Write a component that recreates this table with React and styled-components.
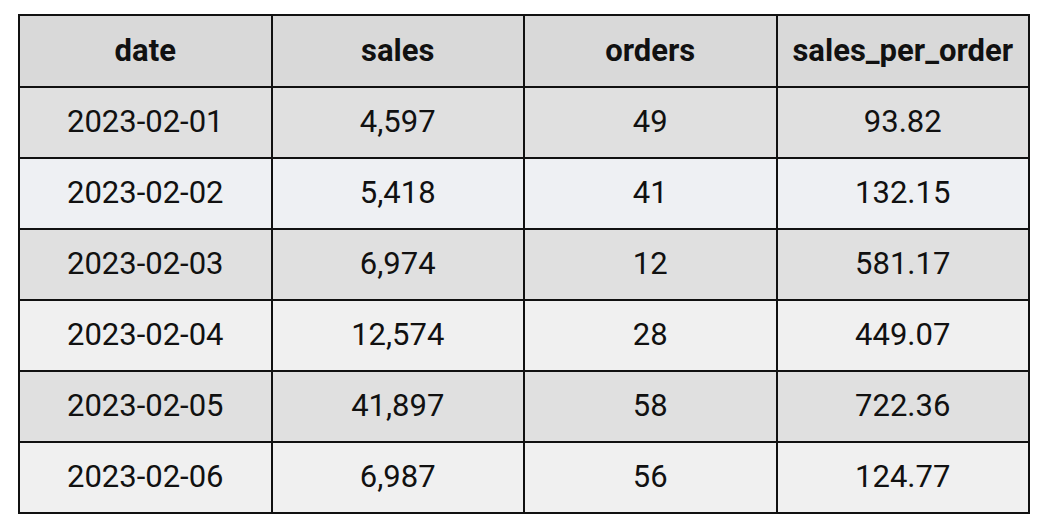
import React from "react";
import styled, { createGlobalStyle } from "styled-components";

const GlobalStyle = createGlobalStyle`
  body {
    margin: 0;
    background: #ffffff;
    font-family: Roboto, "Liberation Sans", sans-serif;
  }
`;

const rows = [
  { date: "2023-02-01", sales: "4,597", orders: 49, spo: "93.82" },
  { date: "2023-02-02", sales: "5,418", orders: 41, spo: "132.15" },
  { date: "2023-02-03", sales: "6,974", orders: 12, spo: "581.17" },
  { date: "2023-02-04", sales: "12,574", orders: 28, spo: "449.07" },
  { date: "2023-02-05", sales: "41,897", orders: 58, spo: "722.36" },
  { date: "2023-02-06", sales: "6,987", orders: 56, spo: "124.77" },
];

const rowColors = ["#e0e0e0", "#eef0f3", "#e0e0e0", "#f0f0f0", "#e0e0e0", "#f0f0f0"];

const Page = styled.div`
  padding: 14px 21px 18px 18px;
`;

const Table = styled.table`
  width: 1012px;
  border-collapse: collapse;
  table-layout: fixed;
  border: 2px solid #111;
  color: #111;
`;

const HeadCell = styled.th`
  height: 68px;
  padding: 0 0 2px;
  background: #d9d9d9;
  border: 2px solid #111;
  font-size: 31px;
  font-weight: 700;
  text-align: center;
`;

const Row = styled.tr`
  background: ${(p) => p.$bg};
`;

const Cell = styled.td`
  height: 67px;
  padding: 0 0 2px;
  border: 2px solid #111;
  font-size: 31px;
  font-weight: 400;
  text-align: center;
`;

const App = () => {
  return (
    <>
      <GlobalStyle />
      <Page>
        <Table>
          <thead>
            <tr>
              <HeadCell>date</HeadCell>
              <HeadCell>sales</HeadCell>
              <HeadCell>orders</HeadCell>
              <HeadCell>sales_per_order</HeadCell>
            </tr>
          </thead>
          <tbody>
            {rows.map((r, i) => (
              <Row key={r.date} $bg={rowColors[i]}>
                <Cell>{r.date}</Cell>
                <Cell>{r.sales}</Cell>
                <Cell>{r.orders}</Cell>
                <Cell>{r.spo}</Cell>
              </Row>
            ))}
          </tbody>
        </Table>
      </Page>
    </>
  );
};

export default App;
